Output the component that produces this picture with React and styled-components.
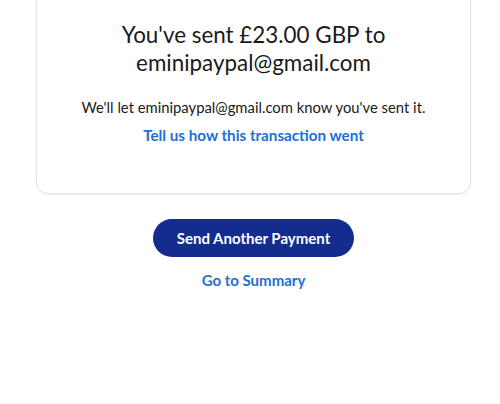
import React from "react";
import styled, { createGlobalStyle } from "styled-components";

const Global = createGlobalStyle`
  html, body { margin: 0; padding: 0; background: #ffffff; }
  body { font-family: Lato, "Noto Sans", sans-serif; color: #1a1a1a; overflow: hidden; }
`;

const Page = styled.div`
  width: 500px;
  height: 404px;
  box-sizing: border-box;
  padding: 0 29px 0 36px;
  display: flex;
  flex-direction: column;
  align-items: center;
`;

const Card = styled.section`
  align-self: stretch;
  margin-top: -20px;
  box-sizing: border-box;
  height: 214px;
  border: 1px solid #e3e3e3;
  border-radius: 12px;
  box-shadow: 0 1px 2px rgba(0, 0, 0, 0.06);
  padding: 40px 16px 0;
  display: flex;
  flex-direction: column;
  align-items: center;
  text-align: center;
`;

const Title = styled.h1`
  margin: 0;
  font-size: 22.4px;
  line-height: 28px;
  font-weight: 400;
  color: #1a1a1a;
`;

const Message = styled.p`
  margin: 20px 0 0;
  font-size: 14.8px;
  line-height: 20px;
  color: #1a1a1a;
`;

const TextLink = styled.a`
  display: block;
  margin-top: ${(p) => p.$gap}px;
  font-size: ${(p) => p.$size}px;
  line-height: 20px;
  font-weight: 700;
  color: #1f6fd6;
  text-decoration: none;
  cursor: pointer;
`;

const PrimaryButton = styled.button`
  margin-top: 25px;
  width: 201px;
  height: 38px;
  border: none;
  border-radius: 19px;
  background: #142c8e;
  color: #ffffff;
  font-family: Lato, "Noto Sans", sans-serif;
  font-size: 15px;
  font-weight: 700;
  cursor: pointer;
`;

export default function App() {
  return (
    <>
      <Global />
      <Page>
        <Card>
          <Title>
            You've sent £23.00 GBP to
            <br />
            eminipaypal@gmail.com
          </Title>
          <Message>We'll let eminipaypal@gmail.com know you've sent it.</Message>
          <TextLink $gap={8} $size={15.2}>Tell us how this transaction went</TextLink>
        </Card>
        <PrimaryButton>Send Another Payment</PrimaryButton>
        <TextLink $gap={13} $size={15}>Go to Summary</TextLink>
      </Page>
    </>
  );
}
